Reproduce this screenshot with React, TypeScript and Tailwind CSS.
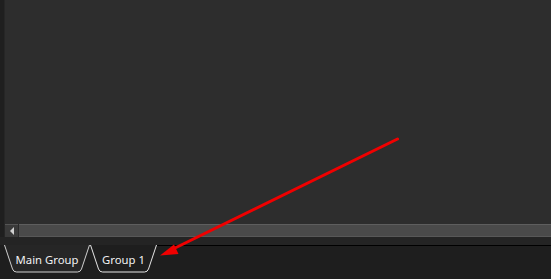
import React from "react";

function Tab({ label, width, fill, active }: { label: string; width: number; fill: string; active?: boolean }) {
  const w = width;
  const h = 28;
  const d = `M0.5 0 L8.5 ${h - 4} Q9.5 ${h - 1} 12.5 ${h - 1} L${w - 12.5} ${h - 1} Q${w - 9.5} ${h - 1} ${w - 8.5} ${h - 4} L${w - 0.5} 0`;
  return (
    <div className="relative flex items-start justify-center" style={{ width: w, height: h }}>
      <svg className="absolute inset-0" width={w} height={h} viewBox={`0 0 ${w} ${h}`}>
        <path d={`${d} Z`} fill={fill} stroke="none" />
        <path d={d} fill="none" stroke={active ? "#e6e6e6" : "#d0d0d0"} strokeWidth="1" />
      </svg>
      <span className="relative mt-[7px] text-[11.3px] leading-[16px] text-[#f2f2f2]" style={{ fontFamily: '"Noto Sans", "Segoe UI", sans-serif' }}>
        {label}
      </span>
    </div>
  );
}

export default function App() {
  return (
    <div className="relative w-[551px] h-[279px] overflow-hidden flex flex-col bg-[#1e1e1e]">
      <div className="flex h-[237px]">
        <div className="w-[5px] bg-[#1f1f1f] border-r border-[#262626]" />
        <div className="flex-1 flex flex-col">
          <div className="flex-1 bg-[#2d2d2d]" />
          <div className="h-[13px] flex bg-[#2a2a2a]">
            <div className="w-[13px] h-[13px] bg-[#3a3a3a] border-t border-[#555] flex items-center justify-center">
              <div className="w-0 h-0 border-y-[4px] border-y-transparent border-r-[4px] border-r-[#cfcfcf]" />
            </div>
            <div className="w-px bg-[#2a2a2a]" />
            <div className="flex-1 bg-[#4a4a4a] border-t border-[#5e5e5e] border-b border-b-[#585858]" />
          </div>
        </div>
      </div>
      <div className="h-[8px] bg-[#242424]" />
      <div className="flex-1 flex relative">
        <div className="flex pl-[4px] pt-0 gap-0">
          <Tab label="Main Group" width={86} fill="#262626" />
          <Tab label="Group 1" width={67} fill="#1e1e1e" active />
        </div>
        <div className="flex-1 border-t border-black" />
      </div>
      <svg className="absolute inset-0 pointer-events-none" width="551" height="279" viewBox="0 0 551 279">
        <line x1="397.5" y1="139" x2="172" y2="249.5" stroke="#f00000" strokeWidth="3" strokeLinecap="round" />
        <polygon points="160,255.5 174,244.5 178.5,254" fill="#f00000" />
      </svg>
    </div>
  );
}
